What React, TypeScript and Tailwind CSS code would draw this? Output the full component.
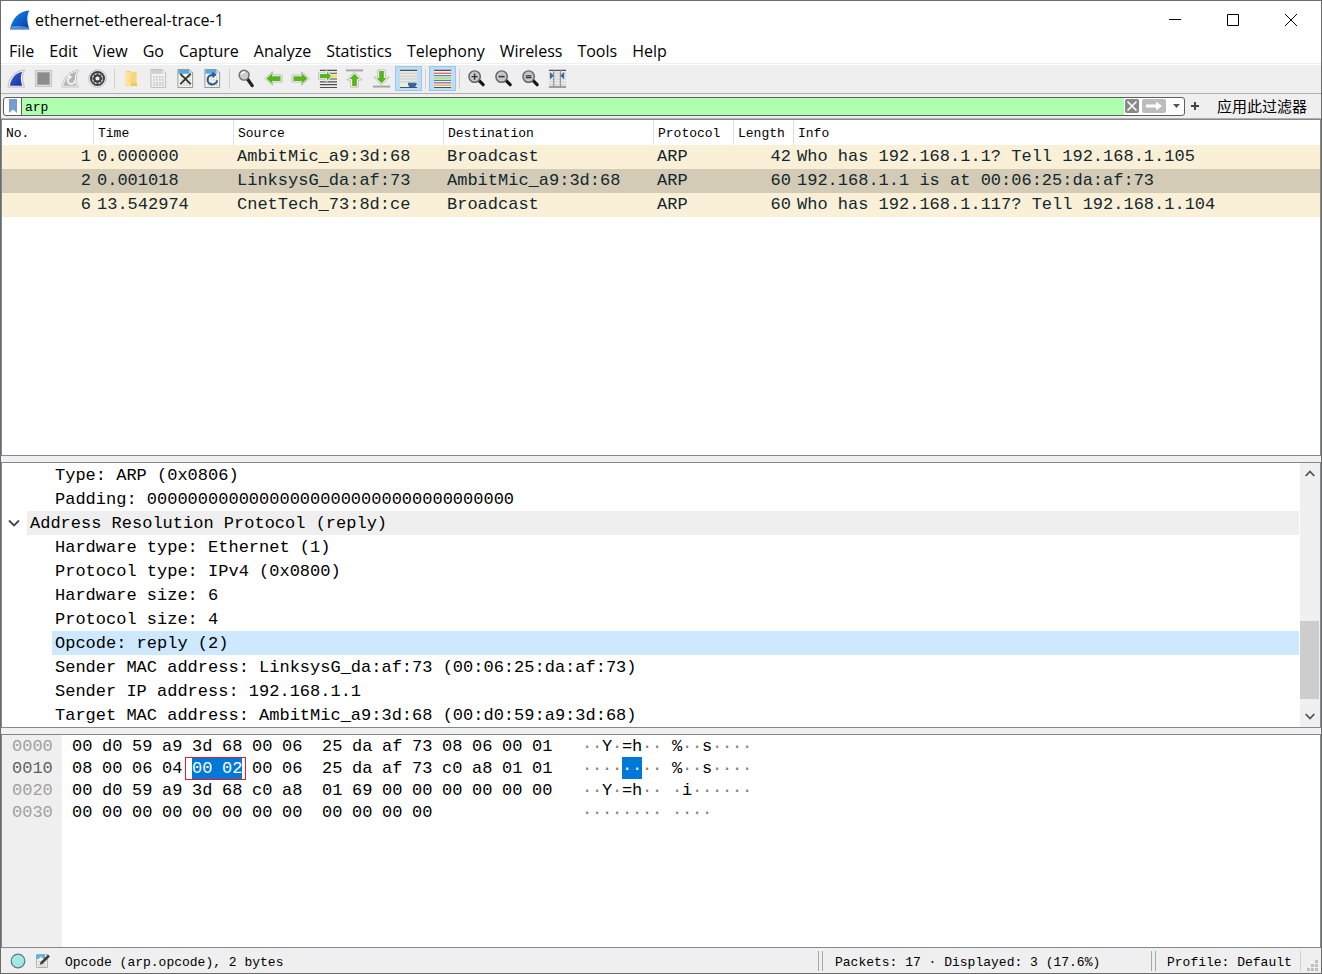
import { useState, type ReactNode } from 'react'

// ── Data ──────────────────────────────────────────
const MENUS = ['File', 'Edit', 'View', 'Go', 'Capture', 'Analyze', 'Statistics', 'Telephony', 'Wireless', 'Tools', 'Help']

const COLUMNS = ['No.', 'Time', 'Source', 'Destination', 'Protocol', 'Length', 'Info']

const PACKETS = [
  { no: 1, time: '0.000000',  src: 'AmbitMic_a9:3d:68', dst: 'Broadcast',         proto: 'ARP', len: 42, info: 'Who has 192.168.1.1? Tell 192.168.1.105' },
  { no: 2, time: '0.001018',  src: 'LinksysG_da:af:73', dst: 'AmbitMic_a9:3d:68', proto: 'ARP', len: 60, info: '192.168.1.1 is at 00:06:25:da:af:73' },
  { no: 6, time: '13.542974', src: 'CnetTech_73:8d:ce', dst: 'Broadcast',         proto: 'ARP', len: 60, info: 'Who has 192.168.1.117? Tell 192.168.1.104' },
]

const DETAILS = [
  { text: 'Type: ARP (0x0806)' },
  { text: 'Padding: 000000000000000000000000000000000000' },
  { text: 'Address Resolution Protocol (reply)', header: true },
  { text: 'Hardware type: Ethernet (1)' },
  { text: 'Protocol type: IPv4 (0x0800)' },
  { text: 'Hardware size: 6' },
  { text: 'Protocol size: 4' },
  { text: 'Opcode: reply (2)' },
  { text: 'Sender MAC address: LinksysG_da:af:73 (00:06:25:da:af:73)' },
  { text: 'Sender IP address: 192.168.1.1' },
  { text: 'Target MAC address: AmbitMic_a9:3d:68 (00:d0:59:a9:3d:68)' },
]

const HEX_ROWS = [
  { offset: '0000', bytes: '00 d0 59 a9 3d 68 00 06 25 da af 73 08 06 00 01', ascii: '··Y·=h··%··s····' },
  { offset: '0010', bytes: '08 00 06 04 00 02 00 06 25 da af 73 c0 a8 01 01', ascii: '········%··s····' },
  { offset: '0020', bytes: '00 d0 59 a9 3d 68 c0 a8 01 69 00 00 00 00 00 00', ascii: '··Y·=h···i······' },
  { offset: '0030', bytes: '00 00 00 00 00 00 00 00 00 00 00 00', ascii: '············' },
]

const SELECTED_ROW = 1
const SELECTED_BYTES = [4, 5]

// ── Icons ─────────────────────────────────────────
function Svg({ children }: { children: ReactNode }) {
  return <svg viewBox="0 0 20 20" className="size-[19px]" aria-hidden="true">{children}</svg>
}

function Logo() {
  return (
    <svg viewBox="0 0 20 20" className="size-5" aria-hidden="true">
      <defs>
        <linearGradient id="logo" x1="0" y1="0" x2="1" y2="1">
          <stop offset="0" stopColor="#2f8fe8" />
          <stop offset="0.5" stopColor="#0b62cc" />
          <stop offset="1" stopColor="#0a3f96" />
        </linearGradient>
      </defs>
      <path d="M0 19.5C2 9 8.5 1 19.500 0.500C16.500 5 16.800 12 19.500 19.500Z" fill="url(#logo)" />
      <path d="M0 19.500L1 16.500C7 15.500 13 16 19 18L19.500 19.500Z" fill="#7fb2e8" opacity="0.6" />
    </svg>
  )
}

const FIN = 'M1 19C2 10 7.500 2 18.500 1C15.500 6 15.800 13 18.500 19Z'
const FIN_INNER = 'M3 17.500C4.500 10 8.500 4 16 2.800C14 7 14.200 12.500 16 17.500Z'

function StartIcon() {
  return (
    <Svg>
      <defs>
        <linearGradient id="fin" x1="0" y1="0" x2="1" y2="1">
          <stop offset="0" stopColor="#3f62d8" />
          <stop offset="1" stopColor="#1c2fa0" />
        </linearGradient>
      </defs>
      <path d={FIN} fill="#f5f5f5" stroke="#b8b8b8" strokeWidth="1" />
      <path d={FIN_INNER} fill="url(#fin)" />
    </Svg>
  )
}

function StopIcon() {
  return (
    <Svg>
      <rect x="1.500" y="1.500" width="17" height="17" fill="#dedede" stroke="#c4c4c4" />
      <rect x="3.500" y="3.500" width="13" height="13" fill="#8c8c8c" />
    </Svg>
  )
}

function RestartIcon() {
  return (
    <Svg>
      <path d={FIN} fill="#ededed" stroke="#c6c6c6" />
      <path d={FIN_INNER} fill="#b4b4b4" />
      <path d="M14.300 12A3.600 3.600 0 1 1 10.500 8.600" fill="none" stroke="#f6f6f6" strokeWidth="2" />
      <path d="M7 5.500L11.800 8.200L8 11.500Z" fill="#f6f6f6" />
    </Svg>
  )
}

function OptionsIcon() {
  return (
    <Svg>
      <circle cx="10" cy="10" r="9.300" fill="#f4f4f4" stroke="#bdbdbd" />
      <circle cx="10" cy="10" r="7.900" fill="#3a3d3f" />
      <circle cx="10" cy="10" r="5.900" fill="#f2f2f2" />
      <circle cx="10" cy="10" r="3.400" fill="none" stroke="#3a3d3f" strokeWidth="2.400" />
      <path d="M10 4.600V6.500M10 13.500V15.400M4.600 10H6.500M13.500 10H15.400M6.200 6.200L7.500 7.500M12.500 12.500L13.800 13.800M6.200 13.800L7.500 12.500M12.500 7.500L13.800 6.200" stroke="#3a3d3f" strokeWidth="1.900" />
    </Svg>
  )
}

function FolderIcon() {
  return (
    <Svg>
      <path d="M4 2H9L10 5H14V18H4Z" fill="#f3cb62" />
      <path d="M10 3H15.500V15H10Z" fill="#f7d77c" />
      <path d="M4 2L9.500 4.500V19L4 17Z" fill="#ffe296" />
      <path d="M13 15H16V18H10V16Z" fill="#f0c558" />
    </Svg>
  )
}

function SheetBase({ muted }: { muted?: boolean }) {
  return (
    <>
      <path d="M2 0.500H14L17.500 4V19.500H2Z" fill={muted ? '#f1f1f1' : '#f7f7ee'} stroke={muted ? '#bdbdbd' : '#8c9298'} />
      <path d="M2.500 1H14V5H2.500Z" fill={muted ? '#cfcfcf' : '#58a9dc'} />
      <path d="M14 0.500V4H17.500Z" fill={muted ? '#fafafa' : '#dceaf2'} stroke={muted ? '#c8c8c8' : '#7fb1d2'} strokeWidth="0.600" />
      <path d="M4.500 8.500H16M4.500 11.500H16M4.500 14.500H16M4.500 17H16" stroke={muted ? '#bcbcbc' : '#c8c8bc'} strokeWidth="1.300" strokeDasharray="2 1" />
    </>
  )
}

function SaveIcon() {
  return <Svg><SheetBase muted /></Svg>
}

function CloseFileIcon() {
  return (
    <Svg>
      <SheetBase />
      <path d="M4.500 5L15.500 16M15.500 5L4.500 16" stroke="#32383c" strokeWidth="1.900" fill="none" />
    </Svg>
  )
}

function ReloadIcon() {
  return (
    <Svg>
      <SheetBase />
      <path d="M14.800 12A5 5 0 1 1 10.500 6.300" stroke="#23569c" strokeWidth="2.200" fill="none" />
      <path d="M9.500 2.800L14.500 6L10 9.500Z" fill="#23569c" />
    </Svg>
  )
}

function FindIcon() {
  return (
    <Svg>
      <path d="M11 10.500L16 17.500" stroke="#202020" strokeWidth="3.400" strokeLinecap="round" />
      <circle cx="7.500" cy="6.500" r="5.200" fill="#c9cccd" stroke="#6d6d6d" strokeWidth="1.500" />
      <path d="M4.500 6A3.500 3.500 0 0 1 8.500 3.300" stroke="#fff" strokeWidth="1.200" fill="none" />
    </Svg>
  )
}

function LeftArrowIcon() {
  return (
    <Svg>
      <path d="M0.800 10L9 2.800V6.300H19V13.700H9V17.200Z" fill="#fff" stroke="#b9b9b9" strokeLinejoin="round" />
      <path d="M2.500 10L8.500 4.500V7.500H17.500V12.500H8.500V15.500Z" fill="#58b61b" />
    </Svg>
  )
}

function RightArrowIcon() {
  return (
    <Svg>
      <path d="M19.200 10L11 2.800V6.300H1V13.700H11V17.200Z" fill="#fff" stroke="#b9b9b9" strokeLinejoin="round" />
      <path d="M17.500 10L11.500 4.500V7.500H2.500V12.500H11.500V15.500Z" fill="#58b61b" />
    </Svg>
  )
}

function GoToIcon() {
  return (
    <Svg>
      <path d="M2 1.500H20M2 13.500H20M2 16.500H20M2 19.500H20M12 4.500H20M12 10.500H20" stroke="#4b4f4f" strokeWidth="1.200" />
      <rect x="12" y="6" width="8" height="3" fill="#f8e34a" />
      <path d="M15.500 7.500L8.500 0.800V4H0.500V11H8.500V14.200Z" fill="#fff" stroke="#b9b9b9" strokeWidth="0.800" />
      <path d="M14 7.500L9.500 3V5.300H1.800V9.700H9.500V12Z" fill="#58b61b" />
    </Svg>
  )
}

function FirstIcon() {
  return (
    <Svg>
      <rect x="1" y="0.500" width="18" height="2" fill="#a4a4a4" />
      <path d="M10 3L18 11.500H14V19H6V11.500H2Z" fill="#fff" stroke="#b9b9b9" strokeLinejoin="round" />
      <path d="M10 4.800L15.300 10.500H12.500V17.800H7.500V10.500H4.700Z" fill="#58b61b" />
    </Svg>
  )
}

function LastIcon() {
  return (
    <Svg>
      <rect x="1" y="17.500" width="18" height="2" fill="#a4a4a4" />
      <path d="M10 17L18 8.500H14V1H6V8.500H2Z" fill="#fff" stroke="#b9b9b9" strokeLinejoin="round" />
      <path d="M10 15.200L15.300 9.500H12.500V2.200H7.500V9.500H4.700Z" fill="#58b61b" />
    </Svg>
  )
}

function AutoScrollIcon() {
  return (
    <Svg>
      <rect x="1" y="1" width="18" height="18" fill="#e9ece6" />
      <path d="M1 4.500H19M1 7.500H19M1 10.500H19M1 13.500H19" stroke="#c6cac4" />
      <path d="M1 1.500H19M1 19.500H19" stroke="#4b4f4f" strokeWidth="1.200" />
      <path d="M9.500 14.500H18.500V16.500L17 19H11L9.500 16.500Z" fill="#3465a4" />
    </Svg>
  )
}

function ColorizeIcon() {
  return (
    <Svg>
      <rect x="1" y="1" width="18" height="18" fill="#f2f2ee" />
      <path d="M1 1.500H19M1 19.500H19" stroke="#4b4f4f" strokeWidth="1.200" />
      <path d="M1 4.500H19" stroke="#ef5350" strokeWidth="1.300" />
      <path d="M1 7H19" stroke="#4a7fc0" strokeWidth="1.300" />
      <path d="M1 9.500H19" stroke="#8ae234" strokeWidth="1.300" />
      <path d="M1 12H19" stroke="#4a7fc0" strokeWidth="1.300" />
      <path d="M1 14.500H19" stroke="#8b6a9c" strokeWidth="1.300" />
      <path d="M1 17H19" stroke="#d9a92e" strokeWidth="1.300" />
    </Svg>
  )
}

function ZoomIcon({ kind }: { kind: 'in' | 'out' | 'reset' }) {
  return (
    <Svg>
      <path d="M12.500 12L17 16.500" stroke="#151515" strokeWidth="3.400" strokeLinecap="round" />
      <circle cx="8" cy="8" r="6" fill="#c4c8c9" stroke="#5d5f60" strokeWidth="1.500" />
      {kind === 'in' && <path d="M4.800 8H11.200M8 4.800V11.200" stroke="#2e3436" strokeWidth="1.500" />}
      {kind === 'out' && <path d="M4.800 8H11.200" stroke="#2e3436" strokeWidth="1.600" />}
      {kind === 'reset' && <path d="M5 7.200H11M5 9H11" stroke="#2e3436" strokeWidth="1.300" />}
    </Svg>
  )
}

function ResizeIcon() {
  return (
    <Svg>
      <rect x="1" y="1" width="18" height="18" fill="#ececE8" />
      <path d="M1 4.500H19M1 7.500H19M1 10.500H19M1 13.500H19M1 16.500H19" stroke="#cfd1cb" />
      <path d="M1 1.500H19M1 19H19" stroke="#4b4f4f" strokeWidth="1.200" />
      <path d="M6 1V19M13 1V19" stroke="#8e9090" strokeWidth="1.200" />
      <path d="M2.500 4L5.500 7L2.500 10ZM16.500 4L13.500 7L16.500 10Z" fill="#3465a4" stroke="#3465a4" />
    </Svg>
  )
}

const TOOL_GROUPS: { name: string; icon: ReactNode; active?: boolean }[][] = [
  [
    { name: 'Start capture', icon: <StartIcon /> },
    { name: 'Stop capture', icon: <StopIcon /> },
    { name: 'Restart capture', icon: <RestartIcon /> },
    { name: 'Capture options', icon: <OptionsIcon /> },
  ],
  [
    { name: 'Open file', icon: <FolderIcon /> },
    { name: 'Save file', icon: <SaveIcon /> },
    { name: 'Close file', icon: <CloseFileIcon /> },
    { name: 'Reload file', icon: <ReloadIcon /> },
  ],
  [
    { name: 'Find packet', icon: <FindIcon /> },
    { name: 'Previous packet', icon: <LeftArrowIcon /> },
    { name: 'Next packet', icon: <RightArrowIcon /> },
    { name: 'Go to packet', icon: <GoToIcon /> },
    { name: 'First packet', icon: <FirstIcon /> },
    { name: 'Last packet', icon: <LastIcon /> },
    { name: 'Auto scroll', icon: <AutoScrollIcon />, active: true },
  ],
  [{ name: 'Colorize', icon: <ColorizeIcon />, active: true }],
  [
    { name: 'Zoom in', icon: <ZoomIcon kind="in" /> },
    { name: 'Zoom out', icon: <ZoomIcon kind="out" /> },
    { name: 'Normal size', icon: <ZoomIcon kind="reset" /> },
    { name: 'Resize columns', icon: <ResizeIcon /> },
  ],
]

// ── Bars ──────────────────────────────────────────
function TitleBar() {
  return (
    <header className="flex h-[37px] items-center bg-white pl-[9px] pr-px">
      <Logo />
      <h1 className="ml-[5px] flex-1 text-base">ethernet-ethereal-trace-1</h1>
      <button aria-label="Minimize" className="flex h-full w-[58px] items-center justify-center">
        <svg viewBox="0 0 12 12" className="size-3"><path d="M0 5.500H12" stroke="#000" /></svg>
      </button>
      <button aria-label="Maximize" className="flex h-full w-[58px] items-center justify-center">
        <svg viewBox="0 0 12 12" className="size-3"><path d="M0.500 0.500H11.500V11.500H0.500Z" stroke="#000" fill="none" /></svg>
      </button>
      <button aria-label="Close" className="flex h-full w-[58px] items-center justify-center">
        <svg viewBox="0 0 12 12" className="size-3"><path d="M0 0L12 12M12 0L0 12" stroke="#000" /></svg>
      </button>
    </header>
  )
}

function Toolbar() {
  return (
    <div className="mt-px flex h-[29px] items-start border-b border-[#b0b0b0] bg-[#efefef] pl-0.5 pt-px">
      {TOOL_GROUPS.map((group, gi) => (
        <div key={gi} className="flex items-center">
          {gi > 0 && <div className="mx-[3px] h-5 w-px bg-[#cfcfcf]" />}
          {group.map(t => (
            <button key={t.name} aria-label={t.name}
              className={`flex h-[25px] w-[27px] items-center justify-center border
                ${t.active ? 'border-[#90c8f6] bg-[#c0dcf3]' : 'border-transparent'}`}>
              {t.icon}
            </button>
          ))}
        </div>
      ))}
    </div>
  )
}

function FilterBar() {
  const [filter, setFilter] = useState('arp')
  return (
    <div className="flex h-[25px] items-center border-b border-[#b0b0b0] bg-[#efefef] pl-0.5">
      <div className="flex h-[19px] flex-1 items-center overflow-hidden rounded-[3px] border border-[#5f5f5f] bg-white">
        <button aria-label="Bookmarks" className="flex h-full w-[18px] items-center justify-center border-r border-[#5f5f5f]">
          <svg viewBox="0 0 8 14" className="h-3.5 w-2"><path d="M0 0H8V14L4 10.500L0 14Z" fill="#729fcf" /></svg>
        </button>
        <input aria-label="Display filter" value={filter} onChange={e => setFilter(e.target.value)}
          className="h-full min-w-0 flex-1 bg-[#afffaf] px-[3px] pt-0.5 font-['Liberation_Mono',monospace] text-[13px] outline-none" />
        <button aria-label="Clear" onClick={() => setFilter('')} className="ml-px flex h-3.5 w-3.5 items-center justify-center rounded-[2px] bg-[#878a87]">
          <svg viewBox="0 0 14 14" className="size-3.5"><path d="M2.500 2.500L11.500 11.500M11.500 2.500L2.500 11.500" stroke="#fff" strokeWidth="1.600" /></svg>
        </button>
        <button aria-label="Apply" className="ml-[3px] flex h-3.5 w-6 items-center justify-center rounded-[2px] bg-[#bdbdbd]">
          <svg viewBox="0 0 24 14" className="h-3.5 w-6"><path d="M4 5.500H14V2.500L20 7L14 11.500V8.500H4Z" fill="#fff" /></svg>
        </button>
        <button aria-label="Filter history" className="flex h-full w-[18px] items-center justify-end pr-1">
          <svg viewBox="0 0 7 4" className="h-1 w-[7px]"><path d="M0 0H7L3.500 4Z" fill="#555" /></svg>
        </button>
      </div>
      <button aria-label="Add filter button" className="flex w-5 items-center justify-center">
        <svg viewBox="0 0 8 8" className="size-2"><path d="M0 4H8M4 0V8" stroke="#444" strokeWidth="2" /></svg>
      </button>
      <button className="ml-3 mr-3.5 font-['Noto_Sans_CJK_SC',sans-serif] text-[15px] leading-5">应用此过滤器</button>
    </div>
  )
}

// ── Panes ─────────────────────────────────────────
function PacketList({ selected, onSelect }: { selected: number; onSelect: (no: number) => void }) {
  return (
    <section className="min-h-40 grow-[337] basis-0 border border-[#828790] bg-white">
      <table className="w-full table-fixed border-separate border-spacing-0">
        <colgroup>
          <col className="w-[92px]" />
          <col className="w-[140px]" />
          <col className="w-[210px]" />
          <col className="w-[210px]" />
          <col className="w-20" />
          <col className="w-[60px]" />
          <col />
        </colgroup>
        <thead>
          <tr className="h-[25px] font-['Liberation_Mono',monospace] text-[13px]">
            {COLUMNS.map(c => (
              <th key={c} className="border-r border-[#e0e0e0] p-0 pl-1 pt-0.5 text-left font-normal last:border-r-0">{c}</th>
            ))}
          </tr>
        </thead>
        <tbody className="font-['Liberation_Mono',monospace] text-[17px] text-[#12272e]">
          {PACKETS.map(p => (
            <tr key={p.no} onClick={() => onSelect(p.no)}
              className={`h-6 leading-6 ${p.no === selected ? 'bg-[#d4cbb6]' : 'bg-[#faf0d7]'}`}>
              <td className="p-0 pr-[3px] text-right">{p.no}</td>
              <td className="p-0 pl-[3px]">{p.time}</td>
              <td className="p-0 pl-[3px]">{p.src}</td>
              <td className="p-0 pl-[3px]">{p.dst}</td>
              <td className="p-0 pl-[3px]">{p.proto}</td>
              <td className="p-0 pr-[3px] text-right">{p.len}</td>
              <td className="truncate p-0 pl-[3px]">{p.info}</td>
            </tr>
          ))}
        </tbody>
      </table>
    </section>
  )
}

function PacketDetails() {
  const [selected, setSelected] = useState(7)
  return (
    <section className="flex border border-[#828790] bg-white font-['Liberation_Mono',monospace] text-[17px]">
      <ul className="min-w-0 flex-1">
        {DETAILS.map((d, i) => (
          <li key={d.text} onClick={() => setSelected(i)} className="flex h-6 leading-[22px]">
            {d.header ? (
              <button aria-label="Collapse" className="flex w-[25px] items-center justify-center pr-0.5">
                <svg viewBox="0 0 12 8" className="h-2 w-3"><path d="M1 1.500L6 6.500L11 1.500" stroke="#444" strokeWidth="1.800" fill="none" /></svg>
              </button>
            ) : (
              <span className="w-[50px]" />
            )}
            <span className={`flex-1 truncate pl-[3px] pt-0.5 ${i === selected ? 'bg-[#cde8ff]' : d.header ? 'bg-[#efefef]' : ''}`}>
              {d.text}
            </span>
          </li>
        ))}
      </ul>
      <div className="ml-px flex w-5 flex-col items-center bg-[#f0f0f0] pr-px">
        <button aria-label="Scroll up" className="flex h-[21px] items-center justify-center">
          <svg viewBox="0 0 10 7" className="h-[7px] w-2.5"><path d="M0.700 6L5 1.500L9.300 6" stroke="#505050" strokeWidth="1.800" fill="none" /></svg>
        </button>
        <div className="grow-[137]" />
        <div className="w-full grow-[78] bg-[#cdcdcd]" />
        <div className="grow-[7]" />
        <button aria-label="Scroll down" className="flex h-[21px] items-center justify-center">
          <svg viewBox="0 0 10 7" className="h-[7px] w-2.5"><path d="M0.700 1L5 5.500L9.300 1" stroke="#505050" strokeWidth="1.800" fill="none" /></svg>
        </button>
      </div>
    </section>
  )
}

function HexRow({ row, active }: { row: typeof HEX_ROWS[number]; active: boolean }) {
  const bytes = row.bytes.split(' ')
  const isSelected = (i: number) => active && SELECTED_BYTES.includes(i)
  return (
    <div className="flex h-[22px] whitespace-pre leading-6">
      <span className={`w-[70px] pl-2.5 ${active ? 'text-[#606060]' : 'text-[#a0a0a0]'}`}>{row.offset}</span>
      <span className="flex w-[510px]">
        {bytes.map((b, i) => (
          <span key={i} className={`relative ${i === 7 ? 'w-10' : 'w-[30px]'}`}>
            <span className={`block h-full ${isSelected(i) ? 'bg-[#0078d7] text-white' : ''} ${isSelected(i) && i !== SELECTED_BYTES[1] ? 'w-full' : 'w-5'}`}>{b}</span>
            {isSelected(i) && i === SELECTED_BYTES[0] && (
              <span className="absolute -left-[7px] top-0 z-10 h-[23px] w-[61px] border border-[#e81c24]" />
            )}
          </span>
        ))}
      </span>
      <span className="flex">
        {[...row.ascii].map((c, i) => (
          <span key={i} className={`w-2.5 text-center ${i === 7 ? 'mr-2.5' : ''}
            ${isSelected(i) ? 'bg-[#0078d7] text-white' : c === '·' ? 'text-[#808080]' : ''}`}>{c}</span>
        ))}
      </span>
    </div>
  )
}

function PacketBytes() {
  return (
    <section className="min-h-24 grow-[214] basis-0 border border-[#828790] bg-linear-to-r from-[#efefef] from-[60px] to-white to-[60px] font-['Liberation_Mono',monospace] text-[17px]">
      {HEX_ROWS.map((r, i) => <HexRow key={r.offset} row={r} active={i === SELECTED_ROW} />)}
    </section>
  )
}

function StatusBar() {
  return (
    <footer className="flex h-[25px] items-center bg-[#efefef] pl-[9px] font-['Liberation_Mono',monospace] text-[13px]">
      <button aria-label="Expert info">
        <svg viewBox="0 0 16 16" className="size-4"><circle cx="8" cy="8" r="6.800" fill="#a0e8e4" stroke="#5d7a7a" strokeWidth="1.200" /></svg>
      </button>
      <button aria-label="Capture comments" className="ml-[9px]">
        <svg viewBox="0 0 16 16" className="size-4">
          <path d="M1.500 1.500H12.500V14.500H1.500Z" fill="#f4f4ec" stroke="#b0b4b4" />
          <path d="M1.500 1.500H10V6H1.500Z" fill="#5fb0e0" />
          <path d="M3 8.500H11M3 11H11M3 13H11" stroke="#c8c8bc" />
          <path d="M4 5.500H8M6 3.500V7.500" stroke="#fff" />
          <path d="M14 2.500L6.500 10" stroke="#3c4042" strokeWidth="2.600" />
          <path d="M5 11.500L5.500 9L7.500 11Z" fill="#222" />
        </svg>
      </button>
      <span className="ml-3.5 flex-1 pt-1">Opcode (arp.opcode), 2 bytes</span>
      <div className="flex h-full w-[333px] items-center">
        <span className="h-5 w-[5px] border-x border-[#a8a8a8]" />
        <span className="ml-3 whitespace-pre pt-1">Packets: 17 · Displayed: 3 (17.6%)</span>
      </div>
      <div className="flex h-full w-[170px] items-center">
        <span className="h-5 w-[5px] border-x border-[#a8a8a8]" />
        <span className="ml-[11px] flex-1 pt-1">Profile: Default</span>
        <span className="h-5 w-px bg-[#d0d0d0]" />
        <svg viewBox="0 0 12 12" className="ml-1.5 mr-0.5 mt-2.5 size-3" aria-hidden="true">
          <path d="M8 0H11V3H8ZM4 4H7V7H4ZM8 4H11V7H8ZM0 8H3V11H0ZM4 8H7V11H4ZM8 8H11V11H8Z" fill="#bfbfbf" />
        </svg>
      </div>
    </footer>
  )
}

// ── App ───────────────────────────────────────────
export default function App() {
  const [selected, setSelected] = useState(2)
  return (
    <div className="flex min-h-screen flex-col border border-[#6b6b6b] bg-white font-['Open_Sans',sans-serif] text-black">
      <TitleBar />
      <nav className="flex h-[26px] items-center gap-[15px] border-b border-[#efefef] bg-white pl-2 pt-px text-base">
        {MENUS.map(m => <button key={m}>{m}</button>)}
      </nav>
      <Toolbar />
      <FilterBar />
      <main className="flex flex-1 flex-col gap-1.5 bg-[#f0f0f0]">
        <PacketList selected={selected} onSelect={setSelected} />
        <PacketDetails />
        <PacketBytes />
      </main>
      <StatusBar />
    </div>
  )
}
